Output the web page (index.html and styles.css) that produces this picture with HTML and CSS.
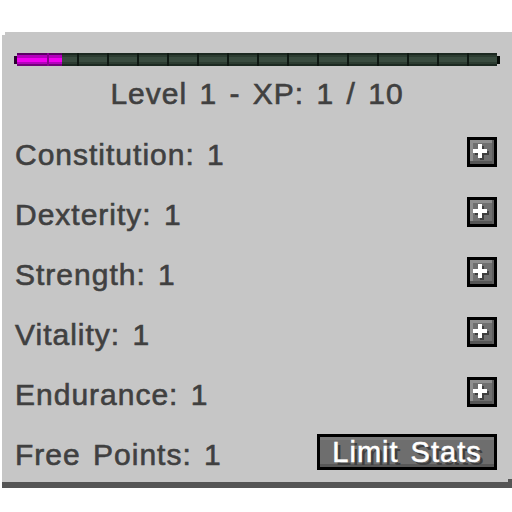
FILE: index.html
```html
<!DOCTYPE html>
<html>
<head>
<meta charset="utf-8">
<link rel="stylesheet" href="styles.css">
</head>
<body>
<div class="panel">
  <div class="xpbar">
    <span class="cap cap-l"></span>
    <div class="track"><div class="fill" style="width:45px"></div></div>
    <span class="cap cap-r"></span>
  </div>
  <div class="level">Level 1 - XP: 1 / 10</div>
  <div class="stats">
    <div class="row">
      <span class="label">Constitution: 1</span>
      <button class="plus"><svg viewBox="0 0 24 24" width="24" height="24"><rect width="24" height="24" fill="#6f6f6f"/><rect width="24" height="3" fill="#8e8e8e"/><rect width="3" height="21" fill="#8e8e8e"/><rect y="21" width="24" height="3" fill="#565656"/><rect x="22" width="2" height="24" fill="#5e5e5e"/><rect x="5" y="11" width="14" height="4" fill="#3f3f3f"/><rect x="10" y="6" width="4" height="14" fill="#3f3f3f"/><rect x="3" y="9" width="14" height="4" fill="#fff"/><rect x="8" y="4" width="4" height="14" fill="#fff"/></svg></button>
    </div>
    <div class="row">
      <span class="label">Dexterity: 1</span>
      <button class="plus"><svg viewBox="0 0 24 24" width="24" height="24"><rect width="24" height="24" fill="#6f6f6f"/><rect width="24" height="3" fill="#8e8e8e"/><rect width="3" height="21" fill="#8e8e8e"/><rect y="21" width="24" height="3" fill="#565656"/><rect x="22" width="2" height="24" fill="#5e5e5e"/><rect x="5" y="11" width="14" height="4" fill="#3f3f3f"/><rect x="10" y="6" width="4" height="14" fill="#3f3f3f"/><rect x="3" y="9" width="14" height="4" fill="#fff"/><rect x="8" y="4" width="4" height="14" fill="#fff"/></svg></button>
    </div>
    <div class="row">
      <span class="label">Strength: 1</span>
      <button class="plus"><svg viewBox="0 0 24 24" width="24" height="24"><rect width="24" height="24" fill="#6f6f6f"/><rect width="24" height="3" fill="#8e8e8e"/><rect width="3" height="21" fill="#8e8e8e"/><rect y="21" width="24" height="3" fill="#565656"/><rect x="22" width="2" height="24" fill="#5e5e5e"/><rect x="5" y="11" width="14" height="4" fill="#3f3f3f"/><rect x="10" y="6" width="4" height="14" fill="#3f3f3f"/><rect x="3" y="9" width="14" height="4" fill="#fff"/><rect x="8" y="4" width="4" height="14" fill="#fff"/></svg></button>
    </div>
    <div class="row">
      <span class="label">Vitality: 1</span>
      <button class="plus"><svg viewBox="0 0 24 24" width="24" height="24"><rect width="24" height="24" fill="#6f6f6f"/><rect width="24" height="3" fill="#8e8e8e"/><rect width="3" height="21" fill="#8e8e8e"/><rect y="21" width="24" height="3" fill="#565656"/><rect x="22" width="2" height="24" fill="#5e5e5e"/><rect x="5" y="11" width="14" height="4" fill="#3f3f3f"/><rect x="10" y="6" width="4" height="14" fill="#3f3f3f"/><rect x="3" y="9" width="14" height="4" fill="#fff"/><rect x="8" y="4" width="4" height="14" fill="#fff"/></svg></button>
    </div>
    <div class="row">
      <span class="label">Endurance: 1</span>
      <button class="plus"><svg viewBox="0 0 24 24" width="24" height="24"><rect width="24" height="24" fill="#6f6f6f"/><rect width="24" height="3" fill="#8e8e8e"/><rect width="3" height="21" fill="#8e8e8e"/><rect y="21" width="24" height="3" fill="#565656"/><rect x="22" width="2" height="24" fill="#5e5e5e"/><rect x="5" y="11" width="14" height="4" fill="#3f3f3f"/><rect x="10" y="6" width="4" height="14" fill="#3f3f3f"/><rect x="3" y="9" width="14" height="4" fill="#fff"/><rect x="8" y="4" width="4" height="14" fill="#fff"/></svg></button>
    </div>
    <div class="row">
      <span class="label">Free Points: 1</span>
      <button class="limit">Limit Stats</button>
    </div>
  </div>
</div>
</body>
</html>
```
FILE: styles.css
```css
html, body {
  margin: 0;
  padding: 0;
  background: #ffffff;
  overflow: hidden;
}

.panel {
  position: relative;
  margin: 32px 0 0 2px;
  width: 510px;
  height: 450px;
  background: #c6c6c6;
  border-bottom: 6px solid #555555;
  box-shadow: 0 2px 0 #000000;
  font-family: "Liberation Sans", Arial, sans-serif;
  color: #404040;
}

.panel::before {
  content: "";
  position: absolute;
  left: 0;
  top: 0;
  width: 3px;
  height: 3px;
  background: #ffffff;
}

.panel::after {
  content: "";
  position: absolute;
  right: 0;
  bottom: 0;
  width: 4px;
  height: 3px;
  background: #555555;
}

.xpbar {
  display: flex;
  align-items: center;
  padding: 20px 12px 0 12px;
}

.cap {
  display: block;
  width: 3px;
  height: 8px;
}

.cap-l {
  background: #2a0030;
}

.cap-r {
  background: #050a06;
}

.track {
  flex: 1;
  height: 16px;
  box-sizing: border-box;
  padding: 1px 0 2px 0;
  background-color: #050a06;
  background-image:
    repeating-linear-gradient(to right, #0e1812 0 2px, transparent 2px 30px),
    linear-gradient(to bottom, #1c2921 0 2px, #2c3c31 2px 4px, #394b3f 4px 9px, #2c3c31 9px 11px, #1c2921 11px 13px);
  background-origin: content-box;
  background-clip: content-box;
  display: flex;
}

.fill {
  height: 100%;
  background-image:
    repeating-linear-gradient(to right, transparent 0 30px, #8a0090 30px 32px),
    linear-gradient(to bottom, #5c0066 0 2px, #b400bc 2px 5px, #f200f2 5px 9px, #b400bc 9px 11px, #74007c 11px 13px);
}

.level {
  margin-top: 11px;
  height: 30px;
  line-height: 30px;
  font-size: 30px;
  letter-spacing: 1px;
  word-spacing: 3px;
  text-align: center;
  white-space: nowrap;
  -webkit-text-stroke: 0.6px #404040;
}

.stats {
  margin-top: 14px;
  padding: 0 15px 0 13px;
  display: flex;
  flex-direction: column;
}

.row {
  height: 60px;
  display: flex;
  align-items: center;
  justify-content: space-between;
}

.label {
  padding-top: 4px;
  font-size: 30px;
  line-height: 30px;
  letter-spacing: 1px;
  word-spacing: 3px;
  white-space: nowrap;
  -webkit-text-stroke: 0.6px #404040;
}

.plus {
  width: 30px;
  height: 30px;
  margin: 0 0 2px 0;
  padding: 0;
  border: 3px solid #000000;
  background: #6f6f6f;
  box-sizing: border-box;
  display: block;
}

.plus svg {
  display: block;
}

.limit {
  width: 180px;
  height: 36px;
  margin: 0 0 2px 0;
  padding: 0;
  box-sizing: border-box;
  border: 3px solid #000000;
  background: #6e6e6e;
  box-shadow: inset 0 3px 0 #7a7a7a, inset 0 -3px 0 #585858;
  color: #ffffff;
  font-family: "Liberation Sans", Arial, sans-serif;
  font-size: 29px;
  line-height: 30px;
  letter-spacing: 1px;
  word-spacing: 3px;
  text-shadow: 3px 3px 0 #3f3f3f;
  white-space: nowrap;
  -webkit-text-stroke: 0.5px #ffffff;
}
```
